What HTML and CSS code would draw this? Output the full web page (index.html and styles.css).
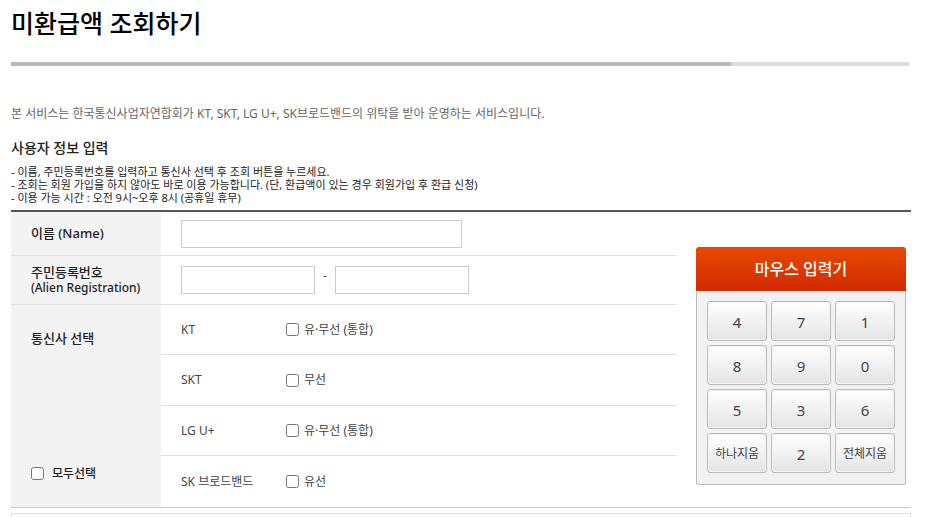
FILE: index.html
```html
<!DOCTYPE html>
<html lang="ko">
<head>
  <meta charset="UTF-8" />
  <meta name="viewport" content="width=device-width, initial-scale=1.0" />
  <title>미환급액 조회하기</title>
  <link rel="stylesheet" href="styles.css">
</head>
<body>
  <main class="content">
    <h1>미환급액 조회하기</h1>
    <div class="title-line"><div class="title-line-on"></div></div>
    <p class="intro">본 서비스는 한국통신사업자연합회가 KT, SKT, LG U+, SK브로드밴드의 위탁을 받아 운영하는 서비스입니다.</p>

    <h2>사용자 정보 입력</h2>
    <ul class="notes">
      <li>- 이름, 주민등록번호를 입력하고 통신사 선택 후 조회 버튼을 누르세요.</li>
      <li>- 조회는 회원 가입을 하지 않아도 바로 이용 가능합니다. (단, 환급액이 있는 경우 회원가입 후 환급 신청)</li>
      <li>- 이용 가능 시간 : 오전 9시~오후 8시 (공휴일 휴무)</li>
    </ul>

    <form class="search-form">
      <table class="form-table">
        <colgroup>
          <col class="col-label">
          <col class="col-company">
          <col>
        </colgroup>
        <tbody>
          <tr class="row-name">
            <th scope="row"><label for="name">이름 (Name)</label></th>
            <td colspan="2"><input type="text" id="name" class="text name"></td>
          </tr>
          <tr class="row-jumin">
            <th scope="row"><label for="jumin1">주민등록번호<br><span class="sub">(Alien Registration)</span></label></th>
            <td colspan="2">
              <div class="jumin">
                <input type="text" id="jumin1" class="text" maxlength="6">
                <span>-</span>
                <input type="password" id="jumin2" class="text" maxlength="7" aria-label="주민등록번호 뒷자리">
              </div>
            </td>
          </tr>
          <tr class="row-company">
            <th scope="rowgroup" rowspan="4" class="company-head">
              <div>통신사 선택</div>
              <label class="check check-all"><input type="checkbox" id="checkAll">모두선택</label>
            </th>
            <td>KT</td>
            <td class="option"><label class="check"><input type="checkbox" name="company">유·무선 (통합)</label></td>
          </tr>
          <tr class="row-company">
            <td>SKT</td>
            <td class="option"><label class="check"><input type="checkbox" name="company">무선</label></td>
          </tr>
          <tr class="row-company">
            <td>LG U+</td>
            <td class="option"><label class="check"><input type="checkbox" name="company">유·무선 (통합)</label></td>
          </tr>
          <tr class="row-company">
            <td>SK 브로드밴드</td>
            <td class="option"><label class="check"><input type="checkbox" name="company">유선</label></td>
          </tr>
        </tbody>
      </table>

      <div class="keypad">
        <h3>마우스 입력기</h3>
        <div class="keys">
          <button type="button">4</button>
          <button type="button">7</button>
          <button type="button">1</button>
          <button type="button">8</button>
          <button type="button">9</button>
          <button type="button">0</button>
          <button type="button">5</button>
          <button type="button">3</button>
          <button type="button">6</button>
          <button type="button" class="erase">하나지움</button>
          <button type="button">2</button>
          <button type="button" class="erase">전체지움</button>
        </div>
      </div>
    </form>
    <div class="agree-box"></div>
  </main>

  <script>
    const checkAll = document.getElementById('checkAll');
    checkAll.addEventListener('change', () => {
      document.querySelectorAll('input[name="company"]').forEach(box => {
        box.checked = checkAll.checked;
      });
    });
  </script>
</body>
</html>
```
FILE: styles.css
```css
* {
  box-sizing: border-box;
}
body {
  margin: 0;
  background: #fff;
  color: #444;
  font-family: 'Noto Sans', 'Noto Sans CJK KR', sans-serif;
  font-size: 12px;
  line-height: 20px;
}
h1, h2, h3, p, ul {
  margin: 0;
  padding: 0;
}
.content {
  padding: 6px 24px 0 11px;
}
h1 {
  font-size: 25px;
  font-weight: 500;
  line-height: 34px;
  color: #000;
}
.title-line {
  height: 4px;
  margin: 22px 2px 0 0;
  background: #ddd;
}
.title-line-on {
  width: calc(80% + 2px);
  height: 4px;
  background: #b9b9b9;
}
.intro {
  margin-top: 38px;
  color: #666;
}
h2 {
  margin-top: 14px;
  font-size: 14px;
  font-weight: 500;
  line-height: 20px;
  color: #222;
}
.notes {
  margin: 7px 0 6px;
  list-style: none;
  font-size: 11px;
  line-height: 13px;
  color: #222;
}
.search-form {
  display: flex;
  gap: 20px;
  padding-right: 5px;
  border-top: 2px solid #555;
  border-bottom: 1px solid #ccc;
}

/* 입력 테이블 */
.form-table {
  flex: 1;
  table-layout: fixed;
  border-spacing: 0;
}
.col-label { width: 150px; }
.col-company { width: 125px; }
th, td {
  padding: 0 0 0 20px;
  border-bottom: 1px solid #e0e0e0;
  text-align: left;
  font-weight: 400;
}
th {
  background: #f3f3f3;
  color: #222;
  font-size: 13px;
  font-weight: 500;
  line-height: 15px;
}
.sub { font-size: 12px; }
.row-name { height: 44px; }
.row-jumin { height: 49px; }
.row-company { height: 50px; }
.row-company:nth-child(even) { height: 51px; }
.row-company:last-child td,
.company-head { border-bottom: 0; }
.option { padding-left: 0; }
.text {
  display: block;
  height: 28px;
  padding: 0 6px;
  border: 1px solid #ccc;
  background: #fff;
  font: inherit;
}
.name { width: 281px; }
.jumin {
  display: flex;
  gap: 8px;
}
.jumin .text { width: 134px; }
.check {
  display: flex;
  align-items: center;
  gap: 5px;
}
.check input {
  width: 13px;
  height: 13px;
  margin: 0;
}
.check-all {
  gap: 8px;
  margin-top: 120px;
  font-size: 12px;
}

/* 마우스 입력기 */
.keypad {
  align-self: flex-start;
  width: 210px;
  margin-top: 35px;
}
.keypad h3 {
  height: 44px;
  border-radius: 3px 3px 0 0;
  background: linear-gradient(#e64a00, #d22a00);
  color: #fff;
  font-size: 16px;
  font-weight: 500;
  line-height: 44px;
  text-align: center;
}
.keys {
  display: grid;
  grid-template-columns: repeat(3, 60px);
  gap: 4px;
  padding: 10px 10px 11px;
  border: 1px solid #bbb;
  border-top: 0;
  border-radius: 0 0 3px 3px;
  background: #f2f2f2;
}
.keys button {
  height: 40px;
  padding: 2px 0 0;
  border: 1px solid #bbb;
  border-radius: 3px;
  background: linear-gradient(#fff, #e4e4e4);
  box-shadow: inset 0 0 0 1px #f4f4f4;
  color: #444;
  font-family: inherit;
  font-size: 15px;
}
.keys .erase {
  padding: 0;
  font-size: 12px;
}
.agree-box {
  height: 4px;
  margin-top: 5px;
  border: 1px solid #e0e0e0;
  border-bottom: 0;
}
```
